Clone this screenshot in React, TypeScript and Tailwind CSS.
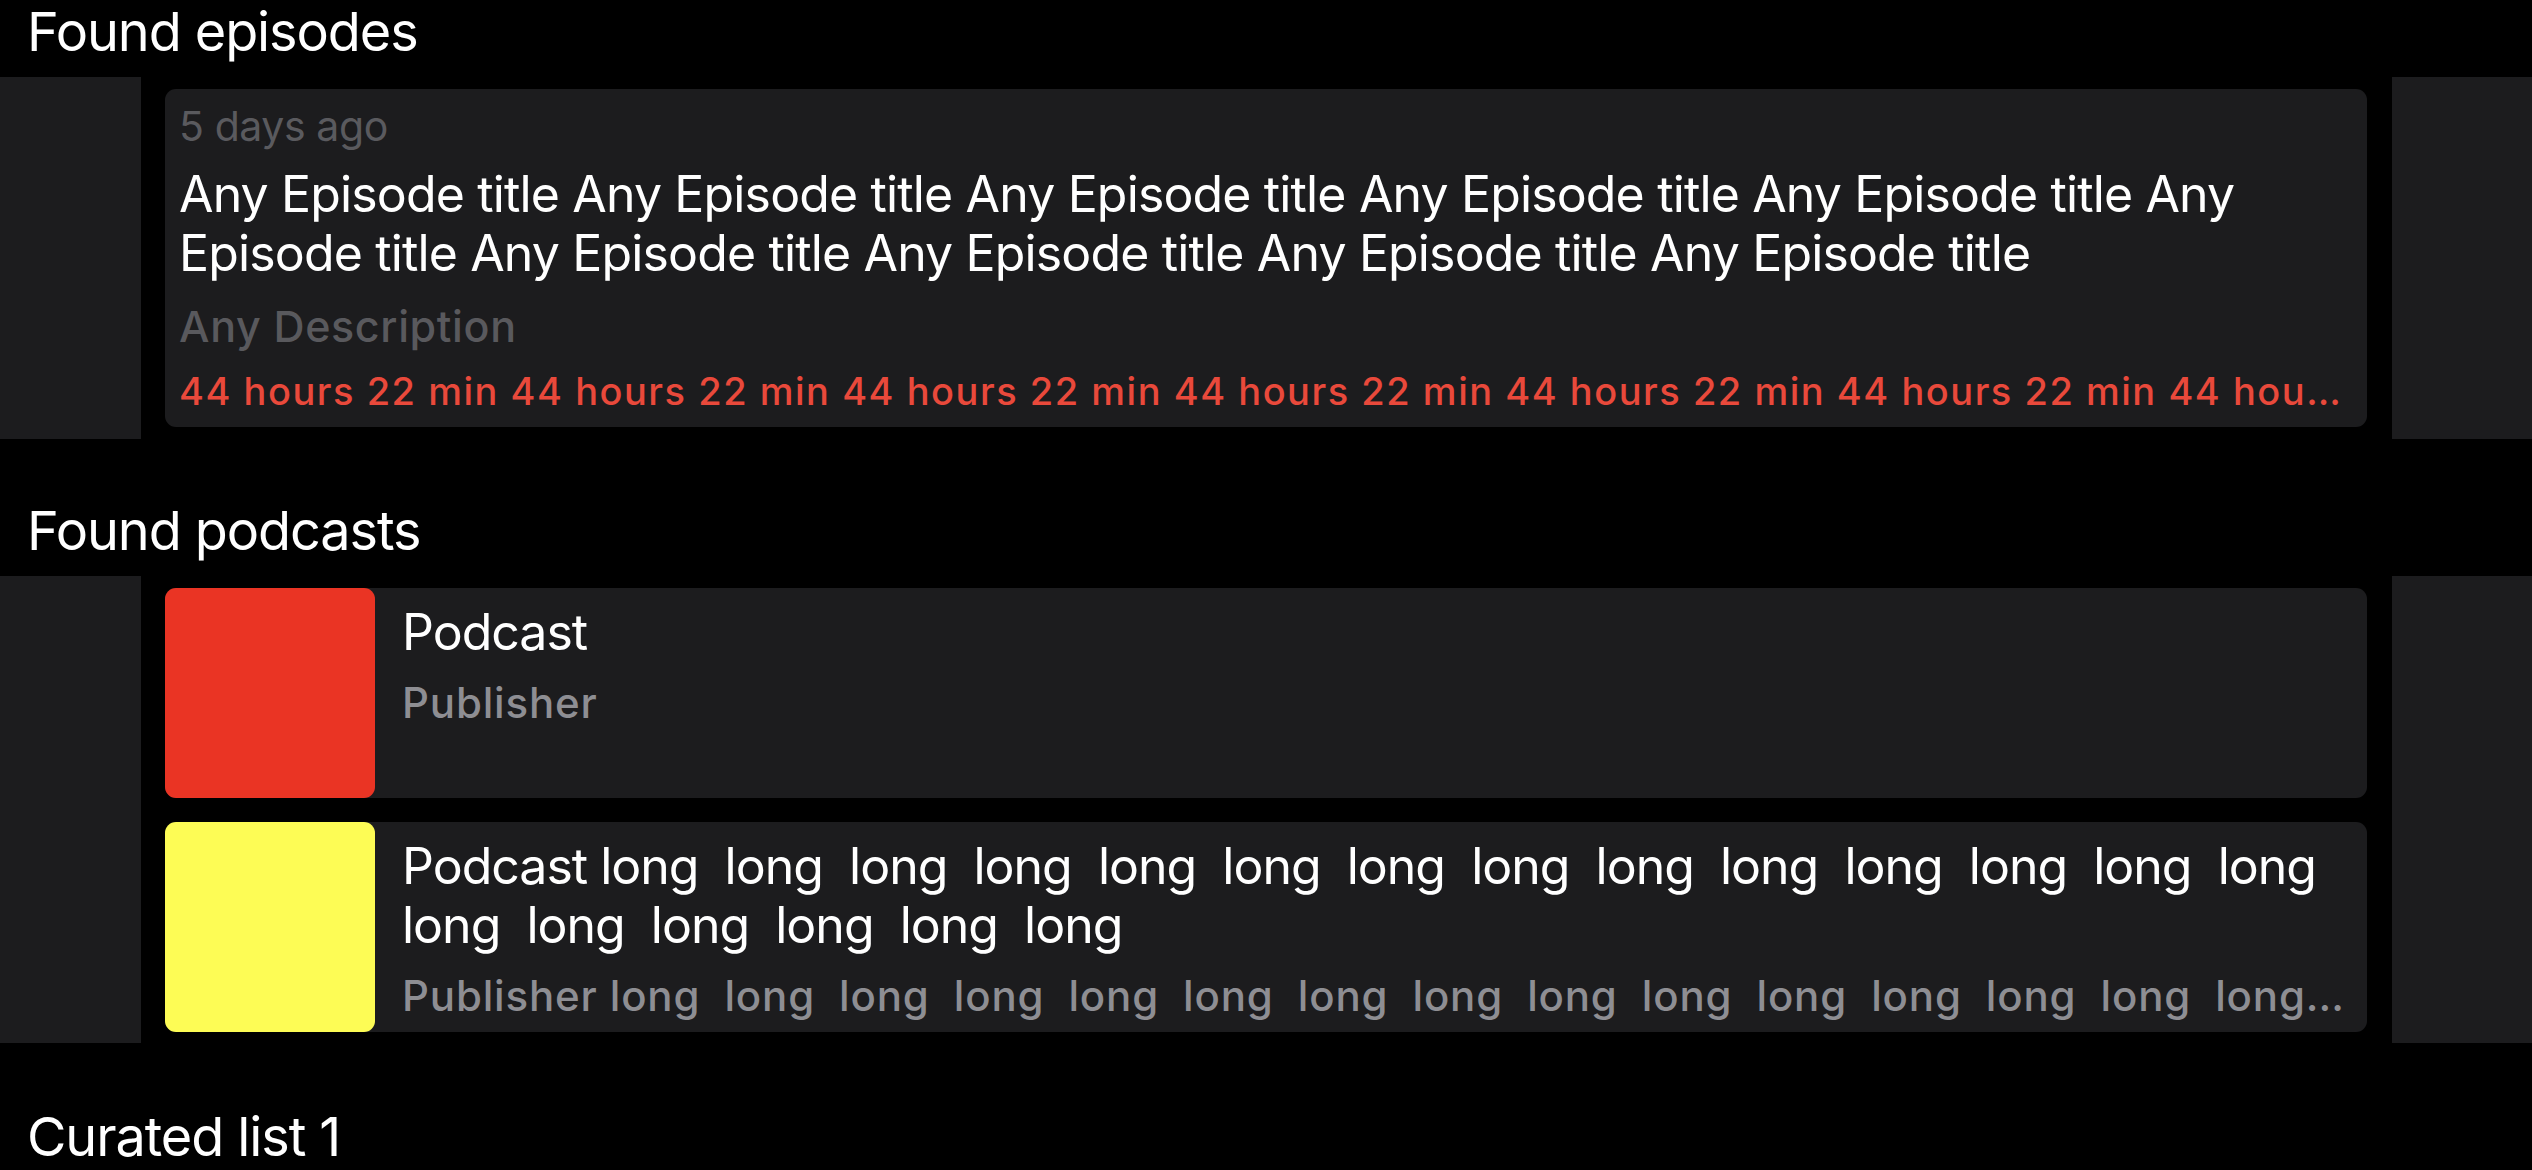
import type { ReactNode } from "react";

const CARD = "bg-[#1c1c1e]";

const EPISODE_LINE_1 =
  "Any Episode title Any Episode title Any Episode title Any Episode title Any Episode title Any";
const EPISODE_LINE_2 =
  "Episode title Any Episode title Any Episode title Any Episode title Any Episode title";
const DURATION = Array.from({ length: 12 }, () => "44 hours 22 min").join(" ");

const longs = (count: number) =>
  Array.from({ length: count }, () => "long").join("  ");

function SectionHeader({ children, className = "" }: { children: ReactNode; className?: string }) {
  return (
    <h2
      className={`${className} mb-[13px] pl-[27px] text-[54px] leading-[64px] font-normal tracking-[-0.02em] text-white`}
    >
      {children}
    </h2>
  );
}

function Strip({ children, className = "" }: { children: ReactNode; className?: string }) {
  return (
    <div className="flex w-full">
      <div className={`w-[141px] shrink-0 ${CARD}`} />
      <div
        className={`flex min-w-0 flex-1 flex-col gap-[24px] pt-[12px] pl-[24px] pr-[25px] ${className}`}
      >
        {children}
      </div>
      <div className={`w-[140px] shrink-0 ${CARD}`} />
    </div>
  );
}

function EpisodeCard() {
  return (
    <div className={`rounded-[11px] ${CARD} px-[14px] pt-[12px] pb-[14px]`}>
      <p className="text-[41px] leading-[50px] tracking-[-0.01em] text-[#5a5a5e]">5 days ago</p>
      <p className="mt-[14px] text-[50px] leading-[59px] tracking-[-0.017em] text-white">
        {EPISODE_LINE_1}
        <br />
        {EPISODE_LINE_2}
      </p>
      <p className="mt-[18px] text-[43px] leading-[50px] font-medium tracking-[0.015em] text-[#59595d]">
        Any Description
      </p>
      <p className="mt-[18px] truncate text-[38px] leading-[44px] font-medium tracking-[0.04em] text-[#e9493b]">
        {DURATION}
      </p>
    </div>
  );
}

function PodcastCard({
  color,
  title,
  publisher,
}: {
  color: string;
  title: ReactNode;
  publisher: string;
}) {
  return (
    <div className={`flex h-[210px] rounded-[11px] ${CARD}`}>
      <div className={`h-[210px] w-[210px] shrink-0 rounded-[11px] ${color}`} />
      <div className="min-w-0 flex-1 overflow-hidden pt-[15px] pl-[27px] pr-[14px]">
        <p className="whitespace-pre text-[50px] leading-[59px] tracking-[-0.02em] text-white">
          {title}
        </p>
        <p className="mt-[16px] truncate whitespace-pre text-[42px] leading-[50px] font-medium tracking-[0.02em] text-[#8e8e93]">
          {publisher}
        </p>
      </div>
    </div>
  );
}

export default function App() {
  return (
    <div className="h-[1170px] w-full overflow-hidden bg-black font-['Inter','Liberation_Sans',sans-serif] text-white">
      <SectionHeader>Found episodes</SectionHeader>
      <Strip className="pb-[12px]">
        <EpisodeCard />
      </Strip>

      <SectionHeader className="mt-[60px]">Found podcasts</SectionHeader>
      <Strip className="pb-[11px]">
        <PodcastCard color="bg-[#ea3424]" title="Podcast" publisher="Publisher" />
        <PodcastCard
          color="bg-[#fdfc55]"
          title={
            <>
              {"Podcast " + longs(14)}
              <br />
              {longs(6)}
            </>
          }
          publisher={"Publisher " + longs(20)}
        />
      </Strip>

      <SectionHeader className="mt-[62px]">Curated list 1</SectionHeader>
    </div>
  );
}
